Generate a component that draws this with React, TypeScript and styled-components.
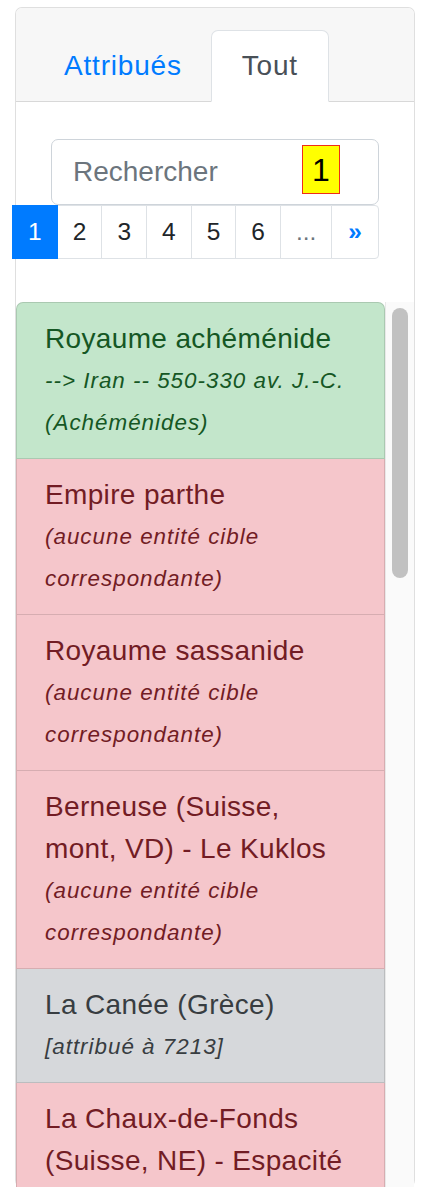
import React from "react";
import styled, { createGlobalStyle, css } from "styled-components";

const GlobalStyle = createGlobalStyle`
  *, *::before, *::after { box-sizing: border-box; }
  html, body { margin: 0; padding: 0; background: #fff; }
  body {
    font-family: "Liberation Sans", Helvetica, Arial, sans-serif;
    color: #212529;
    font-size: 28px;
    line-height: 1.5;
  }
`;

const Page = styled.div`
  padding: 7px 11px 0 15px;
`;

const Card = styled.section`
  width: 400px;
  height: 1180px;
  display: flex;
  flex-direction: column;
  background: #fff;
  border: 1px solid rgba(0, 0, 0, 0.125);
  border-radius: 7px;
`;

const CardHeader = styled.header`
  background: #f7f7f7;
  border-bottom: 1px solid rgba(0, 0, 0, 0.125);
  border-radius: 6px 6px 0 0;
  padding: 22px 35px 21px;
`;

const Tabs = styled.nav`
  display: flex;
  margin: 0 -17.5px -21px -16px;
`;

const Tab = styled.a<{ $active?: boolean }>`
  display: block;
  padding: 14px 28px;
  margin-bottom: -1px;
  font-size: 28px;
  line-height: 42px;
  letter-spacing: 0.8px;
  text-decoration: none;
  cursor: pointer;
  border: 1px solid transparent;
  border-radius: 7px 7px 0 0;
  color: #007bff;
  ${(p) =>
    p.$active &&
    css`
      padding: 14px 30px;
      color: #495057;
      background: #fff;
      border-color: #dee2e6 #dee2e6 #fff;
    `}
`;

const CardBody = styled.div`
  padding: 37px 35px 0;
`;

const SearchWrap = styled.div`
  position: relative;
`;

const SearchInput = styled.input`
  display: block;
  width: 100%;
  height: 66px;
  padding: 10px 21px;
  font-family: inherit;
  font-size: 28px;
  line-height: 42px;
  color: #495057;
  background: #fff;
  border: 1px solid #ced4da;
  border-radius: 7px;
  outline: none;
  &::placeholder {
    color: #6c757d;
    opacity: 1;
  }
`;

const HintBadge = styled.span`
  position: absolute;
  left: 251px;
  top: 6px;
  width: 38px;
  height: 49px;
  display: flex;
  align-items: center;
  justify-content: center;
  background: #ffff00;
  border: 1px solid #ee2d1a;
  color: #000;
  font-family: "Liberation Sans", Arial, sans-serif;
  font-size: 32px;
  line-height: 1;
`;

const Pagination = styled.ul`
  display: flex;
  justify-content: flex-end;
  list-style: none;
  margin: 0;
  padding: 0;
`;

type PageKind = "active" | "num" | "gap" | "next";

const PageLink = styled.li<{ $kind: PageKind }>`
  flex-shrink: 0;
  display: block;
  padding: 7px 15px;
  margin-left: -1px;
  font-size: 24.5px;
  line-height: 38px;
  border: 1px solid #dee2e6;
  background: #fff;
  color: #212529;
  &:first-child {
    margin-left: 0;
  }
  &:last-child {
    border-radius: 0 4px 4px 0;
  }
  ${(p) =>
    p.$kind === "active" &&
    css`
      background: #007bff;
      border-color: #007bff;
      color: #fff;
      position: relative;
      z-index: 1;
    `}
  ${(p) =>
    p.$kind === "gap" &&
    css`
      color: #6c757d;
    `}
  ${(p) =>
    p.$kind === "next" &&
    css`
      color: #007bff;
      font-weight: bold;
      padding: 7px 16px;
    `}
`;

const ListArea = styled.div`
  flex-shrink: 0;
  display: flex;
  margin-top: 43px;
  height: 900px;
`;

const ListScroll = styled.div`
  flex: 1;
  min-width: 0;
  overflow-y: auto;
  scrollbar-width: none;
`;

const ScrollTrack = styled.div`
  width: 29px;
  flex-shrink: 0;
  padding: 6px 6px 0;
  background: #fafafa;
  border-left: 1px solid #e8e8e8;
`;

const ScrollThumb = styled.div`
  height: 270px;
  border-radius: 8px;
  background: #c1c1c1;
`;

type Variant = "success" | "danger" | "secondary";

const variantColors: Record<Variant, { bg: string; fg: string }> = {
  success: { bg: "#c3e6cb", fg: "#155724" },
  danger: { bg: "#f5c6cb", fg: "#721c24" },
  secondary: { bg: "#d6d8db", fg: "#383d41" },
};

const ListItem = styled.div<{ $variant: Variant }>`
  padding: 14.5px 28px;
  font-size: 28px;
  line-height: 42px;
  border: 1px solid rgba(0, 0, 0, 0.125);
  background: ${(p) => variantColors[p.$variant].bg};
  color: ${(p) => variantColors[p.$variant].fg};
  cursor: pointer;
  & + & {
    border-top-width: 0;
  }
  &:first-child {
    border-radius: 7px 7px 0 0;
  }
`;

const Title = styled.div`
  letter-spacing: 0.35px;
`;

const Sub = styled.div`
  font-size: 22.4px;
  line-height: 42px;
  font-style: italic;
  letter-spacing: 1px;
`;

const NONE = "(aucune entité cible correspondante)";

const items: { title: string; sub: string; variant: Variant }[] = [
  { title: "Royaume achéménide", sub: "--> Iran -- 550-330 av. J.-C. (Achéménides)", variant: "success" },
  { title: "Empire parthe", sub: NONE, variant: "danger" },
  { title: "Royaume sassanide", sub: NONE, variant: "danger" },
  { title: "Berneuse (Suisse, mont, VD) - Le Kuklos", sub: NONE, variant: "danger" },
  { title: "La Canée (Grèce)", sub: "[attribué à 7213]", variant: "secondary" },
  { title: "La Chaux-de-Fonds (Suisse, NE) - Espacité - Place Le Corbusier", sub: NONE, variant: "danger" },
  { title: "Lausanne (Suisse, VD) - Cathédrale", sub: NONE, variant: "danger" },
  { title: "Royaume de Macédoine", sub: "--> Grèce -- 808-168 av. J.-C.", variant: "success" },
  { title: "Héraklion (Grèce)", sub: "[attribué à 7214]", variant: "secondary" },
  { title: "Empire byzantin", sub: NONE, variant: "danger" },
  { title: "Genève (Suisse, GE) - Vieille-Ville", sub: NONE, variant: "danger" },
  { title: "Royaume séleucide", sub: NONE, variant: "danger" },
];

const pages: { label: string; kind: PageKind }[] = [
  { label: "1", kind: "active" },
  { label: "2", kind: "num" },
  { label: "3", kind: "num" },
  { label: "4", kind: "num" },
  { label: "5", kind: "num" },
  { label: "6", kind: "num" },
  { label: "...", kind: "gap" },
  { label: "»", kind: "next" },
];

export default function App() {
  return (
    <>
      <GlobalStyle />
      <Page>
        <Card>
          <CardHeader>
            <Tabs>
              <Tab>Attribués</Tab>
              <Tab $active>Tout</Tab>
            </Tabs>
          </CardHeader>
          <CardBody>
            <SearchWrap>
              <SearchInput type="text" placeholder="Rechercher" />
              <HintBadge>1</HintBadge>
            </SearchWrap>
            <Pagination>
              {pages.map((p) => (
                <PageLink key={p.label} $kind={p.kind}>
                  {p.label}
                </PageLink>
              ))}
            </Pagination>
          </CardBody>
          <ListArea>
            <ListScroll>
              {items.map((it, i) => (
                <ListItem key={i} $variant={it.variant}>
                  <Title>{it.title}</Title>
                  <Sub>{it.sub}</Sub>
                </ListItem>
              ))}
            </ListScroll>
            <ScrollTrack>
              <ScrollThumb />
            </ScrollTrack>
          </ListArea>
        </Card>
      </Page>
    </>
  );
}
